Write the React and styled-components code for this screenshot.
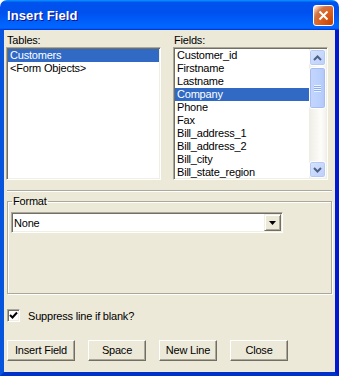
import React from 'react';
import styled, { createGlobalStyle } from 'styled-components';

const GlobalStyle = createGlobalStyle`
    body {
        margin: 0;
        font-family: "Liberation Sans", Arial, sans-serif;
        font-size: 11px;
        letter-spacing: -0.2px;
        color: #000;
    }
`

const Window = styled.div`
    width: 339px;
    height: 376px;
    display: flex;
    flex-direction: column;
    box-sizing: border-box;
`

const TitleBar = styled.div`
    height: 30px;
    flex-shrink: 0;
    display: flex;
    align-items: center;
    justify-content: space-between;
    padding: 0 5px 0 7px;
    border-radius: 7px 7px 0 0;
    background: linear-gradient(180deg, #0997ff, #0053ee 8%, #0050ee 40%, #0066ff 88%, #0066ff 93%, #005bff 95%, #003dd7 96%, #003dd7);
`

const TitleText = styled.span`
    color: #fff;
    font-family: "Liberation Sans", Arial, sans-serif;
    font-weight: bold;
    font-size: 13px;
    letter-spacing: 0.1px;
    text-shadow: 1px 1px #0f1089;
    padding-top: 1px;
`

const CloseButton = styled.div`
    width: 21px;
    height: 21px;
    box-sizing: border-box;
    border: 1px solid #fff;
    border-radius: 3px;
    display: flex;
    align-items: center;
    justify-content: center;
    background: radial-gradient(circle at 90% 90%, #cc4600 0%, #dc6527 55%, #cd7546 70%, #ffccb2 90%, #fff 100%);
`

const Body = styled.div`
    flex: 1;
    display: flex;
    flex-direction: column;
    background: #ece9d8;
    border-style: solid;
    border-width: 0 4px 4px 4px;
    border-color: #0855dd #0019cf #0031c8 #0855dd;
`

const TopRow = styled.div`
    display: flex;
    gap: 12px;
    margin-top: 3px;
    padding-left: 2px;
`

const Column = styled.div`
    display: flex;
    flex-direction: column;
    width: ${p => p.$width}px;
`

const Label = styled.div`
    height: 14px;
    line-height: 14px;
    padding-left: 1px;
`

const ListBox = styled.div`
    height: 133px;
    box-sizing: border-box;
    background: #fff;
    border: 1px solid;
    border-color: #aca899 #fff #fff #aca899;
    box-shadow: inset 1px 1px #716f64, inset -1px -1px #f1efe2;
    padding: 1px;
    display: flex;
    overflow: hidden;
`

const Items = styled.div`
    flex: 1;
    display: flex;
    flex-direction: column;
`

const Item = styled.div`
    height: 13px;
    line-height: 13px;
    padding-left: 2px;
    white-space: nowrap;
    background: ${p => p.$selected ? '#316ac5' : 'transparent'};
    color: ${p => p.$selected ? '#fff' : '#000'};
`

const ScrollBar = styled.div`
    width: 17px;
    display: flex;
    flex-direction: column;
    background: linear-gradient(90deg, #eeede5, #fdfdfa 70%, #f3f1ec);
`

const ScrollButton = styled.div`
    width: 17px;
    height: 17px;
    box-sizing: border-box;
    border: 1px solid #fff;
    border-radius: 3px;
    background: linear-gradient(135deg, #d7e3fd, #bccffb);
    box-shadow: inset 0 0 0 1px #b5c9f5;
    display: flex;
    align-items: center;
    justify-content: center;
`

const Thumb = styled.div`
    height: 42px;
    margin-top: 1px;
    box-sizing: border-box;
    border: 1px solid #fff;
    border-radius: 3px;
    background: linear-gradient(90deg, #c6d6fc, #bad0fd 60%, #b3c8f7);
    box-shadow: inset 0 0 0 1px #a7bdf2;
    display: flex;
    align-items: center;
    justify-content: center;
`

const Grip = styled.div`
    width: 7px;
    height: 7px;
    background: repeating-linear-gradient(180deg, #eef4fe 0 1px, #8cb0f8 1px 2px);
`

const Spacer = styled.div`
    flex: 1;
`

const Separator = styled.div`
    margin: 10px 3px 0;
    height: 1px;
    background: #aca899;
    border-bottom: 1px solid #fff;
`

const GroupBox = styled.fieldset`
    margin: 3px 3px 0;
    padding: 4px 3px 0;
    height: 93px;
    border: 1px solid #aca899;
    box-shadow: 1px 1px #fff, inset 1px 1px #fff;
`

const Legend = styled.legend`
    padding: 0 1px;
    margin-left: 1px;
    line-height: 13px;
    font-size: 11px;
`

const ComboBox = styled.div`
    width: 272px;
    height: 21px;
    box-sizing: border-box;
    background: #fff;
    border: 1px solid;
    border-color: #aca899 #fff #fff #aca899;
    box-shadow: inset 1px 1px #716f64, inset -1px -1px #f1efe2;
    padding: 1px;
    display: flex;
    align-items: center;
`

const ComboText = styled.span`
    flex: 1;
    padding-left: 1px;
`

const DropButton = styled.div`
    width: 17px;
    height: 17px;
    box-sizing: border-box;
    background: #ece9d8;
    border: 1px solid;
    border-color: #f1efe2 #716f64 #716f64 #f1efe2;
    box-shadow: inset 1px 1px #fff, inset -1px -1px #aca899;
    display: flex;
    align-items: center;
    justify-content: center;
`

const CheckRow = styled.label`
    display: flex;
    align-items: center;
    gap: 8px;
    margin: 15px 0 0 3px;
`

const CheckBox = styled.div`
    width: 13px;
    height: 13px;
    box-sizing: border-box;
    background: #fff;
    border: 1px solid;
    border-color: #aca899 #fff #fff #aca899;
    box-shadow: inset 1px 1px #716f64, inset -1px -1px #f1efe2;
    display: flex;
    align-items: center;
    justify-content: center;
`

const ButtonRow = styled.div`
    display: flex;
    gap: 13px;
    margin: 18px 0 0 3px;
`

const Button = styled.div`
    width: ${p => p.$width}px;
    height: 21px;
    box-sizing: border-box;
    background: #ece9d8;
    border: 1px solid;
    border-color: #fff #716f64 #716f64 #fff;
    box-shadow: inset -1px -1px #aca899;
    display: flex;
    align-items: center;
    justify-content: center;
    padding-bottom: 1px;
`

const tables = ['Customers', '<Form Objects>'];
const fields = ['Customer_id', 'Firstname', 'Lastname', 'Company', 'Phone', 'Fax',
    'Bill_address_1', 'Bill_address_2', 'Bill_city', 'Bill_state_region'];

const Arrow = ({ up }) => (
    <svg width="9" height="6" viewBox="0 0 9 6">
        <polyline points={up ? '1,5 4.5,1.5 8,5' : '1,1 4.5,4.5 8,1'} fill="none" stroke="#4d6185" strokeWidth="2" />
    </svg>
);

export default function App() {
    return (
        <>
            <GlobalStyle />
            <Window>
                <TitleBar>
                    <TitleText>Insert Field</TitleText>
                    <CloseButton>
                        <svg width="11" height="11" viewBox="0 0 11 11">
                            <path d="M1.5 1.5 L9.5 9.5 M9.5 1.5 L1.5 9.5" stroke="#fff" strokeWidth="2" />
                        </svg>
                    </CloseButton>
                </TitleBar>
                <Body>
                    <TopRow>
                        <Column $width={155}>
                            <Label>Tables:</Label>
                            <ListBox>
                                <Items>
                                    {tables.map((t, i) => <Item key={t} $selected={i === 0}>{t}</Item>)}
                                </Items>
                            </ListBox>
                        </Column>
                        <Column $width={155}>
                            <Label>Fields:</Label>
                            <ListBox>
                                <Items>
                                    {fields.map(f => <Item key={f} $selected={f === 'Company'}>{f}</Item>)}
                                </Items>
                                <ScrollBar>
                                    <ScrollButton><Arrow up /></ScrollButton>
                                    <Thumb><Grip /></Thumb>
                                    <Spacer />
                                    <ScrollButton><Arrow /></ScrollButton>
                                </ScrollBar>
                            </ListBox>
                        </Column>
                    </TopRow>
                    <Separator />
                    <GroupBox>
                        <Legend>Format</Legend>
                        <ComboBox>
                            <ComboText>None</ComboText>
                            <DropButton>
                                <svg width="7" height="4" viewBox="0 0 7 4">
                                    <polygon points="0,0 7,0 3.5,4" fill="#000" />
                                </svg>
                            </DropButton>
                        </ComboBox>
                    </GroupBox>
                    <CheckRow>
                        <CheckBox>
                            <svg width="9" height="9" viewBox="0 0 9 9">
                                <polyline points="1,4 3.5,6.5 8,1.5" fill="none" stroke="#000" strokeWidth="2" />
                            </svg>
                        </CheckBox>
                        <span>Suppress line if blank?</span>
                    </CheckRow>
                    <ButtonRow>
                        <Button $width={68}>Insert Field</Button>
                        <Button $width={58}>Space</Button>
                        <Button $width={58}>New Line</Button>
                        <Button $width={58}>Close</Button>
                    </ButtonRow>
                </Body>
            </Window>
        </>
    );
}
